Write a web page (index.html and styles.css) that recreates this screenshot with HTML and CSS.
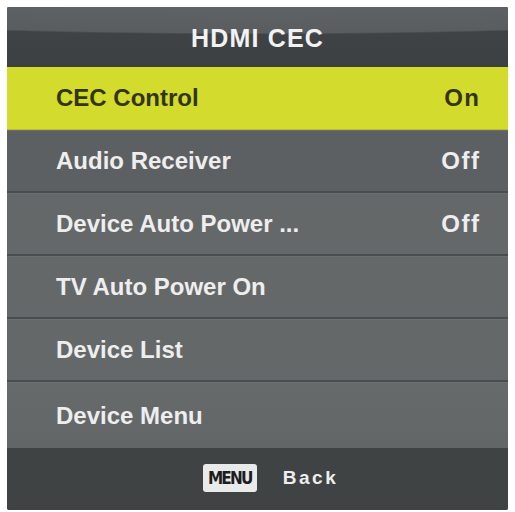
FILE: index.html
```html
<!DOCTYPE html>
<html>
<head>
<meta charset="utf-8">
<link rel="stylesheet" href="styles.css">
</head>
<body>
<div class="panel">
  <div class="header">HDMI CEC</div>
  <div class="row active"><span class="label">CEC Control</span><span class="value">On</span></div>
  <div class="row dark"><span class="label">Audio Receiver</span><span class="value">Off</span></div>
  <div class="row"><span class="label">Device Auto Power ...</span><span class="value">Off</span></div>
  <div class="row"><span class="label">TV Auto Power On</span></div>
  <div class="row"><span class="label">Device List</span></div>
  <div class="row last"><span class="label">Device Menu</span></div>
  <div class="footer">
    <span class="key">MENU</span>
    <span class="back">Back</span>
  </div>
</div>
</body>
</html>
```

FILE: styles.css
```css
html, body {
  margin: 0;
  padding: 0;
  background: #ffffff;
}
body {
  font-family: "Liberation Sans", Arial, sans-serif;
}
.panel {
  margin: 7px 0 0 7px;
  width: 501px;
  display: flex;
  flex-direction: column;
  background: #656869;
  border-radius: 2px;
  overflow: hidden;
}
.header {
  height: 60px;
  display: flex;
  align-items: center;
  justify-content: center;
  color: #f2f2f2;
  font-weight: bold;
  font-size: 25px;
  letter-spacing: 1.2px;
  padding-top: 3px;
  box-sizing: border-box;
  background:
    radial-gradient(ellipse 150% 85% at 50% -30%, #636668 0%, #5a5d5f 86%, rgba(64,68,70,0) 89%),
    linear-gradient(#414547, #3c4042);
}
.row {
  height: 63px;
  box-sizing: border-box;
  display: flex;
  align-items: center;
  justify-content: space-between;
  padding: 0 29px 0 49px;
  color: #eeeeee;
  font-weight: bold;
  font-size: 24px;
  background: #656869;
  border-top: 1px solid #6c6f71;
  border-bottom: 2px solid #4a4d4f;
}
.row.dark {
  background: #5d6063;
}
.row.active {
  background: #d3db2c;
  color: #33350f;
  border-top: none;
  border-bottom: 1px solid #b9c026;
}
.row.last {
  height: 66px;
  border-bottom: none;
  background: linear-gradient(#676a6b, #636667);
}
.value {
  letter-spacing: 1.5px;
  margin-right: -1.5px;
}
.footer {
  height: 62px;
  background: #3f4343;
  display: flex;
  align-items: center;
  justify-content: center;
  gap: 26px;
  padding-left: 26px;
  padding-bottom: 2px;
  box-sizing: border-box;
}
.key {
  width: 54px;
  height: 28px;
  box-sizing: border-box;
  border-radius: 3px;
  background: #e9eaea;
  color: #1e1e1e;
  display: flex;
  align-items: center;
  justify-content: center;
  font-family: "DejaVu Sans Condensed", "DejaVu Sans", sans-serif;
  font-stretch: condensed;
  font-weight: bold;
  font-size: 17px;
  letter-spacing: -1.8px;
}
.back {
  color: #eeeeee;
  font-weight: bold;
  font-size: 19px;
  letter-spacing: 2.5px;
}
```
